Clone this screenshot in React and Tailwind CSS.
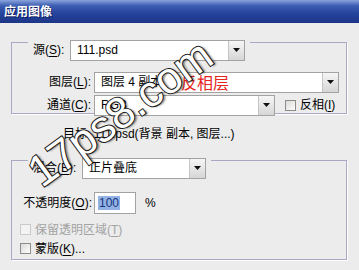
import React from "react";

function Arrow() {
  return (
    <div className="h-full w-[16px] flex items-center justify-center bg-[linear-gradient(to_bottom,#f6f6f6,#d6d6d6)] border-l border-[#c4c4c4]">
      <svg width="7" height="4" viewBox="0 0 7 4">
        <path d="M0 0H7L3.5 4Z" fill="#111" />
      </svg>
    </div>
  );
}

function Select({ width, children }) {
  return (
    <div className={`${width} h-[21px] flex bg-white border border-[#a3a3a3]`}>
      <div className="flex-1 flex items-center pl-[6px] whitespace-nowrap">{children}</div>
      <Arrow />
    </div>
  );
}

function Check({ disabled }) {
  return (
    <div
      className={
        disabled
          ? "w-[11px] h-[11px] border border-[#cbcbcb] bg-[#f3f3f3]"
          : "w-[11px] h-[11px] border border-[#8c8c8c] bg-[linear-gradient(135deg,#d9d9d4,#ffffff)]"
      }
    />
  );
}

function U({ children }) {
  return <span className="underline underline-offset-[2px]">{children}</span>;
}

export default function App() {
  return (
    <div className="relative w-[359px] h-[270px] overflow-hidden bg-[#ececec] text-[12px] leading-[14px] text-black font-['Liberation_Sans','Noto_Sans_CJK_SC',sans-serif]">
      <div className="h-[23px] flex items-center pl-[4px] text-white font-bold text-[12px] bg-[linear-gradient(to_bottom,#8aa4dc_0%,#3c5db2_25%,#25429c_60%,#1c3686_100%)] [text-shadow:1px_1px_0_#102060]">
        应用图像
      </div>

      <div className="pt-[19px]">
        {/* top group */}
        <div className="ml-[11px] w-[336px] h-[72px] border border-[#a9a9c5] shadow-[1px_1px_0_#fff]">
          <div className="-mt-[11px] ml-[16px] pl-[5px] pr-[5px] inline-flex items-center bg-[#ececec]">
            <div className="w-[37px]">
              源(<U>S</U>):
            </div>
            <Select width="w-[175px]">111.psd</Select>
          </div>

          <div className="mt-[11px] flex items-center">
            <div className="w-[82px] text-right pr-[3px]">
              图层(<U>L</U>):
            </div>
            <Select width="w-[245px]">
              <span className="w-[80px]">图层 4 副本</span>
              <span className="text-[16px] leading-none text-[#e4261e] font-['Noto_Sans_CJK_SC',sans-serif]">反相层</span>
            </Select>
          </div>

          <div className="mt-[2px] flex items-center">
            <div className="w-[82px] text-right pr-[3px]">
              通道(<U>C</U>):
            </div>
            <Select width="w-[181px]">RGB</Select>
            <div className="ml-[10px] flex items-center gap-[4px]">
              <Check />
              <span>
                反相(<U>I</U>)
              </span>
            </div>
          </div>
        </div>

        <div className="mt-[13px] ml-[63px] whitespace-nowrap">目标: 111.psd(背景 副本, 图层...)</div>

        {/* bottom group */}
        <div className="mt-[19px] ml-[11px] w-[336px] h-[100px] border border-[#a9a9c5] shadow-[1px_1px_0_#fff]">
          <div className="-mt-[9px] ml-[16px] pl-[5px] pr-[5px] inline-flex items-center bg-[#ececec]">
            <div className="w-[49px]">
              混合(<U>B</U>):
            </div>
            <Select width="w-[124px]">正片叠底</Select>
          </div>

          <div className="mt-[13px] flex items-center">
            <div className="w-[82px] text-right pr-[2px]">
              不透明度(<U>O</U>):
            </div>
            <div className="w-[42px] h-[22px] flex items-center pl-[3px] bg-white border border-[#a3a3a3]">
              <span className="bg-[#92b2e4] text-[#18337c] px-[1px]">100</span>
            </div>
            <span className="ml-[9px]">%</span>
          </div>

          <div className="mt-[9px] ml-[8px] h-[14px] flex items-center gap-[4px] text-[#a3a3a3]">
            <Check disabled />
            <span>
              保留透明区域(<U>T</U>)
            </span>
          </div>

          <div className="mt-[5px] ml-[8px] h-[14px] flex items-center gap-[4px]">
            <Check />
            <span>
              蒙版(<U>K</U>)...
            </span>
          </div>
        </div>
      </div>

      {/* watermark */}
      <div className="absolute left-[120px] top-[113px] -translate-x-1/2 -translate-y-1/2 rotate-[-36deg] whitespace-nowrap leading-none text-[44px] text-white font-['Liberation_Sans',sans-serif] [-webkit-text-stroke:2px_#1a1a1a] [paint-order:stroke_fill] [text-shadow:2px_2px_2px_rgba(0,0,0,0.45)]">
        17ps8.com
      </div>
    </div>
  );
}
